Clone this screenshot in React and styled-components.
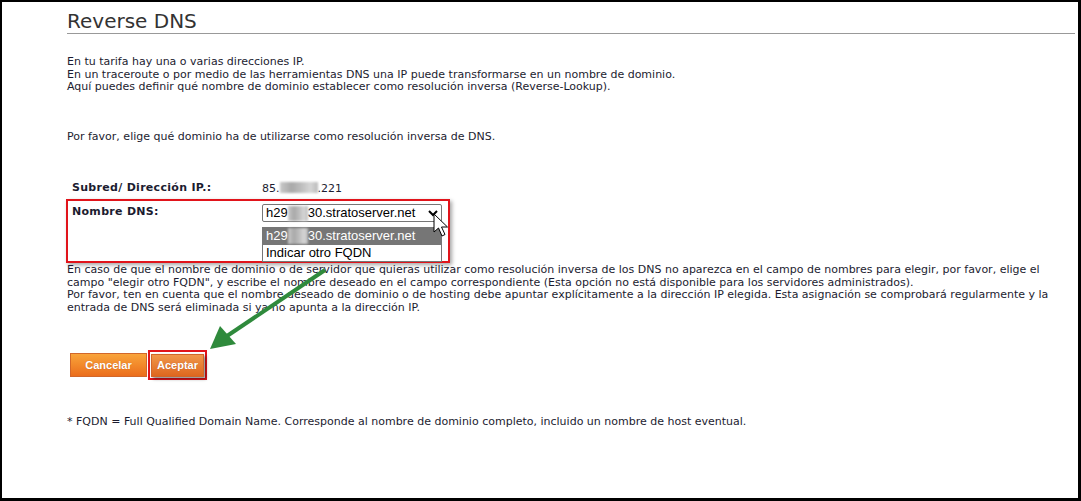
import React from 'react';
import styled, { createGlobalStyle } from 'styled-components';

const GlobalStyle = createGlobalStyle`
	html, body {
		margin: 0;
		padding: 0;
		background: #fff;
	}
`;

const Frame = styled.div`
	position: relative;
	box-sizing: border-box;
	width: 1081px;
	height: 501px;
	border-style: solid;
	border-color: #000;
	border-width: 2px 3px 3px 2px;
	padding: 0 3px 0 65px;
	font-family: 'DejaVu Sans', Verdana, sans-serif;
	font-size: 11px;
	color: #1c1c30;
	overflow: hidden;
`;

const Title = styled.h1`
	margin: 0;
	padding: 7px 0 0 0;
	height: 24px;
	font-weight: normal;
	font-size: 20px;
	color: #333;
	border-bottom: 1px solid #999;
	line-height: 24px;
`;

const Para = styled.p`
	margin: ${(p) => p.$top || 0}px 0 0 0;
	line-height: 12.5px;
	white-space: nowrap;
`;

const FormGrid = styled.div`
	margin-top: 38.5px;
	display: flex;
	flex-direction: column;
`;

const Row = styled.div`
	display: grid;
	grid-template-columns: 190px 1fr;
	padding-left: 5px;
	line-height: 12.5px;
`;

const Label = styled.div`
	font-weight: bold;
	line-height: 12.5px;
	letter-spacing: 0.3px;
`;

const Highlight = styled.div`
	box-sizing: border-box;
	width: 384px;
	height: 64px;
	margin: 3.5px 0 0 -1px;
	padding: 3px 0 0 4px;
	border: 2px solid #e1141b;
	box-shadow: 2px 2px 4px rgba(0, 0, 0, 0.35);
	display: grid;
	grid-template-columns: 190px 180px;
	align-items: start;

	${Label} {
		padding-top: 2px;
	}
`;

const Blur = styled.span`
	display: inline-block;
	width: ${(p) => p.$w}px;
	height: ${(p) => p.$h}px;
	vertical-align: ${(p) => p.$va || 'middle'};
	background: linear-gradient(90deg, #c9c9c9, #a9a9a9 30%, #bdbdbd 55%, #d6d6d6 80%, #bbb);
	filter: blur(1px);
`;

const SelectWrap = styled.div`
	position: relative;
	width: 180px;
`;

const SelectBox = styled.div`
	box-sizing: border-box;
	height: 18px;
	border: 1px solid #767676;
	border-radius: 2px;
	display: flex;
	align-items: center;
	padding: 0 3px;
	font-family: 'Liberation Sans', Arial, sans-serif;
	font-size: 13px;
	color: #000;
	background: #fff;
	justify-content: space-between;
`;

const List = styled.div`
	margin-top: 5px;
	box-sizing: border-box;
	border: 1px solid #767676;
	width: 180px;
	font-family: 'Liberation Sans', Arial, sans-serif;
	font-size: 13px;
	background: #fff;
`;

const Option = styled.div`
	height: 16.5px;
	line-height: 16.5px;
	padding: 0 3px;
	background: ${(p) => (p.$active ? '#767676' : '#fff')};
	color: ${(p) => (p.$active ? '#fff' : '#000')};
`;

const Buttons = styled.div`
	margin-top: 36px;
	margin-left: 3px;
	display: flex;
	align-items: center;
	gap: 1px;
`;

const Button = styled.button`
	box-sizing: border-box;
	height: ${(p) => (p.$focus ? 23 : 24)}px;
	width: ${(p) => (p.$focus ? 53 : 77)}px;
	padding: 0;
	border: 1px solid #d2672a;
	background: ${(p) =>
		p.$focus
			? 'linear-gradient(#f0974a, #de671f)'
			: 'linear-gradient(#f9a43a, #eb6e1c)'};
	color: #fff;
	font-family: 'Liberation Sans', Arial, sans-serif;
	font-weight: bold;
	font-size: 11px;
	text-shadow: 0 0 1px rgba(120, 40, 0, 0.4);
	box-shadow: ${(p) => (p.$focus ? '2px 2px 3px rgba(0,0,0,0.45)' : 'none')};
	cursor: pointer;
`;

const FocusRing = styled.div`
	box-sizing: border-box;
	width: 59px;
	height: 30px;
	padding: 1px;
	border: 2px solid #e1141b;
	display: flex;
	align-items: center;
	justify-content: center;
`;

const Overlay = styled.svg`
	position: absolute;
	left: 0;
	top: 0;
	pointer-events: none;
`;

function Cursor() {
	return (
		<Overlay width="1081" height="501" style={{ zIndex: 3 }}>
			<path
				d="M432 212 L432 230 L436.5 226 L440 234 L443 232.5 L439.5 225 L445.5 225 Z"
				fill="#fff"
				stroke="#000"
				strokeWidth="1"
				strokeLinejoin="round"
			/>
		</Overlay>
	);
}

function Arrow() {
	return (
		<Overlay width="1081" height="501" style={{ zIndex: 2 }}>
			<line x1="323" y1="268" x2="225" y2="334" stroke="#2f8a3c" strokeWidth="4" />
			<polygon points="208,347 218,324 234,342" fill="#2f8a3c" />
		</Overlay>
	);
}

export default function App() {
	return (
		<>
			<GlobalStyle />
			<Frame>
				<Title>Reverse DNS</Title>
				<Para $top={22}>
					En tu tarifa hay una o varias direcciones IP.
					<br />
					En un traceroute o por medio de las herramientas DNS una IP puede transformarse en un nombre de dominio.
					<br />
					Aquí puedes definir qué nombre de dominio establecer como resolución inversa (Reverse-Lookup).
				</Para>
				<Para $top={37.5}>Por favor, elige qué dominio ha de utilizarse como resolución inversa de DNS.</Para>
				<FormGrid>
					<Row>
						<Label>Subred/ Dirección IP.:</Label>
						<div>
							85.<Blur $w={38} $h={11} $va="-1px" />.221
						</div>
					</Row>
					<Highlight>
						<Label>Nombre DNS:</Label>
						<SelectWrap>
							<SelectBox>
								<span>
									h29<Blur $w={20} $h={15} />30.stratoserver.net
								</span>
								<svg width="10" height="8" viewBox="0 0 10 8">
									<path d="M1 2 L5 6 L9 2" fill="none" stroke="#000" strokeWidth="2" />
								</svg>
							</SelectBox>
							<List>
								<Option $active>
									h29<Blur $w={20} $h={16} $va="top" />30.stratoserver.net
								</Option>
								<Option>Indicar otro FQDN</Option>
							</List>
						</SelectWrap>
					</Highlight>
				</FormGrid>
				<Para $top={1}>
					En caso de que el nombre de dominio o de servidor que quieras utilizar como resolución inversa de los DNS no aparezca en el campo de nombres para elegir, por favor, elige el
					<br />
					campo "elegir otro FQDN", y escribe el nombre deseado en el campo correspondiente (Esta opción no está disponible para los servidores administrados).
					<br />
					Por favor, ten en cuenta que el nombre deseado de dominio o de hosting debe apuntar explícitamente a la dirección IP elegida. Esta asignación se comprobará regularmente y la
					<br />
					entrada de DNS será eliminada si ya no apunta a la dirección IP.
				</Para>
				<Buttons>
					<Button>Cancelar</Button>
					<FocusRing>
						<Button $focus>Aceptar</Button>
					</FocusRing>
				</Buttons>
				<Para $top={36}>* FQDN = Full Qualified Domain Name. Corresponde al nombre de dominio completo, incluido un nombre de host eventual.</Para>
				<Arrow />
				<Cursor />
			</Frame>
		</>
	);
}
